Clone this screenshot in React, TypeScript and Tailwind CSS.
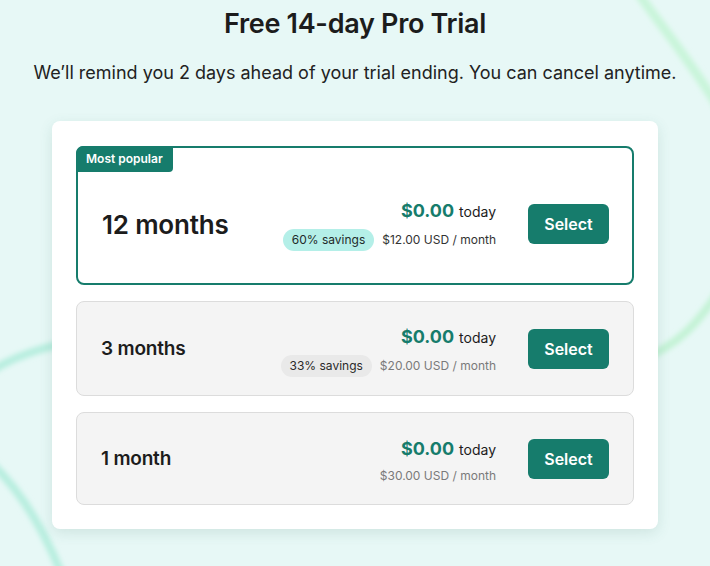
import type { ReactNode } from 'react'

// ─── Data ─────────────────────────────────────────────────────────────────────

interface Plan {
  label: string
  savings?: string
  monthly: string
  popular?: boolean
  height: string
}

const plans: Plan[] = [
  { label: '12 months', savings: '60% savings', monthly: '$12.00 USD / month', popular: true, height: 'h-[139px]' },
  { label: '3 months', savings: '33% savings', monthly: '$20.00 USD / month', height: 'h-[95px]' },
  { label: '1 month', monthly: '$30.00 USD / month', height: 'h-[93px]' },
]

// ─── Background swirls ────────────────────────────────────────────────────────

function Swirls() {
  return (
    <svg
      className="pointer-events-none absolute inset-0 h-full w-full"
      viewBox="0 0 710 566"
      fill="none"
      aria-hidden="true"
    >
      <defs>
        <filter id="soft" x="-20%" y="-20%" width="140%" height="140%">
          <feGaussianBlur stdDeviation="2.5" />
        </filter>
      </defs>
      <g filter="url(#soft)" strokeLinecap="round">
        <path d="M636 -10 C 660 25, 690 60, 720 110" stroke="#c9f5da" strokeWidth="9" />
        <path d="M720 290 C 700 320, 680 345, 640 360" stroke="#c4f3d6" strokeWidth="8" />
        <path d="M-10 372 C 20 352, 60 342, 110 336" stroke="#b8eedf" strokeWidth="8" />
        <path d="M-10 462 C 15 485, 40 520, 62 575" stroke="#b8eedf" strokeWidth="8" />
      </g>
    </svg>
  )
}

// ─── Plan row ─────────────────────────────────────────────────────────────────

function PlanRow({ plan }: { plan: Plan }) {
  const popular = !!plan.popular

  const savingsPill: ReactNode = plan.savings ? (
    <span
      className={
        popular
          ? 'rounded-full bg-[#b4efe8] px-[9px] py-[2px] text-[12px] text-[#1f2a2a]'
          : 'rounded-full bg-[#e9e9e9] px-[9px] py-[2px] text-[12px] text-[#2a2a2a]'
      }
    >
      {plan.savings}
    </span>
  ) : null

  return (
    <div
      className={
        popular
          ? `relative flex ${plan.height} items-center rounded-[8px] border-2 border-[#167c6c] bg-white pl-[24px] pr-[23px] pt-[17px]`
          : `relative flex ${plan.height} items-center rounded-[8px] border border-[#dcdcdc] bg-[#f4f4f4] pl-[24px] pr-[24px] pt-[2px]`
      }
    >
      {popular && (
        <span className="absolute left-[-2px] top-[-2px] rounded-tl-[7px] rounded-br-[4px] bg-[#167c6c] px-[10px] py-[5px] text-[12px] font-semibold leading-[16px] text-white">
          Most popular
        </span>
      )}

      <div
        className={
          popular
            ? 'flex-1 text-[26px] font-semibold tracking-[-0.2px] text-[#1c1c1c]'
            : 'flex-1 text-[19px] font-semibold tracking-[-0.2px] text-[#1c1c1c]'
        }
      >
        {plan.label}
      </div>

      <div className="flex flex-col items-end">
        <div className="flex items-baseline gap-[5px]">
          <span className="text-[18px] font-bold text-[#167c6c]">$0.00</span>
          <span className="text-[14px] text-[#1c1c1c]">today</span>
        </div>
        <div className="mt-[5px] flex items-center gap-[8px]">
          {savingsPill}
          <span className={popular ? 'text-[12px] text-[#333]' : 'text-[12px] text-[#7a7a7a]'}>
            {plan.monthly}
          </span>
        </div>
      </div>

      <button
        className={
          popular
            ? 'ml-[32px] h-[40px] w-[81px] rounded-[6px] bg-[#167c6c] text-[16px] font-semibold text-white'
            : '-mt-[2px] ml-[32px] h-[40px] w-[81px] rounded-[6px] bg-[#167c6c] text-[16px] font-semibold text-white'
        }
      >
        Select
      </button>
    </div>
  )
}

// ─── Component ────────────────────────────────────────────────────────────────

export default function App() {
  return (
    <div
      className="relative h-[566px] w-[710px] overflow-hidden bg-[#e7f8f6]"
      style={{ fontFamily: 'Inter, "Noto Sans", sans-serif' }}
    >
      <Swirls />

      <div className="relative flex flex-col items-center">
        <h1 className="mt-[7px] text-[27px] font-semibold leading-[34px] tracking-[-0.3px] text-[#1c1c1c]">
          Free 14-day Pro Trial
        </h1>
        <p className="mt-[20px] text-[18px] leading-[24px] text-[#222]">
          We’ll remind you 2 days ahead of your trial ending. You can cancel anytime.
        </p>

        {/* Plans card */}
        <div className="mt-[36px] flex w-[606px] flex-col gap-[16px] rounded-[8px] bg-white px-[24px] pb-[24px] pt-[25px] shadow-[0_4px_14px_rgba(60,110,100,0.14)]">
          {plans.map((p) => (
            <PlanRow key={p.label} plan={p} />
          ))}
        </div>
      </div>
    </div>
  )
}
